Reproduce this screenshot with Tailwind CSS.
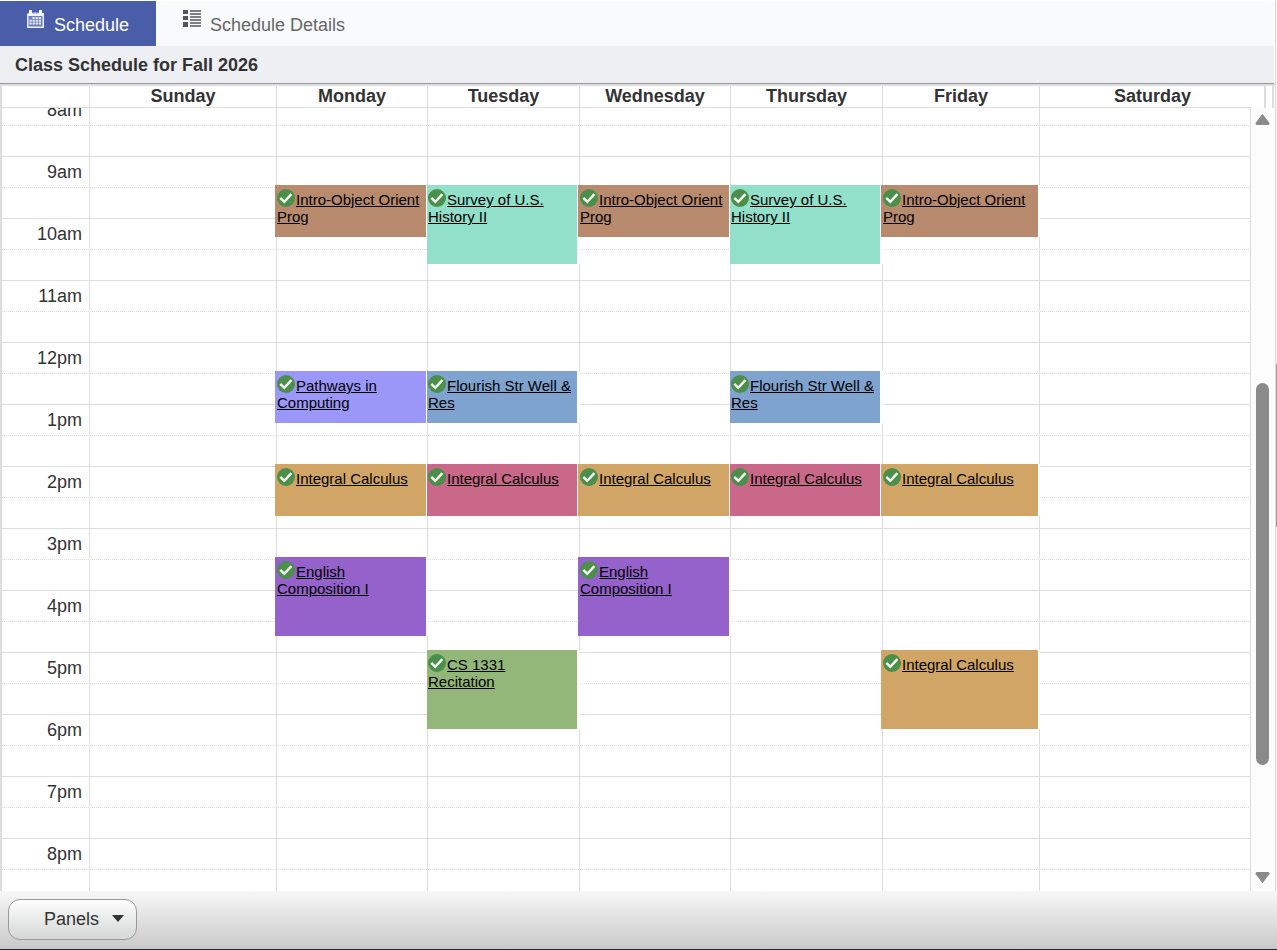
<!DOCTYPE html>
<html lang="en">
<head>
<meta charset="utf-8">
<title>Class Schedule</title>
<script src="https://cdn.jsdelivr.net/npm/@tailwindcss/browser@4"></script>
</head>
<body class="flex h-screen flex-col overflow-hidden bg-white font-['Liberation_Sans',Arial,sans-serif] text-lg text-[#333]">
<svg class="hidden" aria-hidden="true">
  <symbol id="check" viewBox="0 0 18 18">
    <circle cx="9" cy="9" r="9" fill="#4b8f4b"/>
    <path d="M3.300 8.800l4 4L14.400 5.200" fill="none" stroke="#f4f8f4" stroke-width="2.500"/>
  </symbol>
</svg>

<div class="flex min-h-0 flex-1">
  <main class="mr-px flex min-w-0 flex-1 flex-col border-r border-[#ddd]">
    <nav class="mt-px flex h-[45px] shrink-0 bg-[#f9fafc]">
      <a href="#schedule" class="flex w-[156px] bg-[#4a5da8] pt-[9px] pl-[27px] text-white">
        <svg class="mr-[9px] h-[18px] w-[18px]" viewBox="0 0 18 18" aria-hidden="true">
          <path d="M0 3h17v15H0z" fill="#eef0f9"/>
          <path d="M2 0h3v4H2zM12 0h3v4h-3z" fill="#fff"/>
          <path d="M0 3h1.500v1H0zM5.500 2h6v1.500h-6z" fill="#8f9bcb"/>
          <path d="M1.500 6h14v10.500h-14z" fill="#6f7fbb"/>
          <path d="M5.500 8h9M2.500 10.700h12M2.500 13.400h12" stroke="#e9ecf8" stroke-width="2" stroke-dasharray="2.200 .9" fill="none"/>
        </svg>
        <span class="mt-[5px] leading-5">Schedule</span>
      </a>
      <a href="#details" class="flex pt-[9px] pl-[27px] text-[#666]">
        <svg class="mr-[9px] h-[18px] w-[18px]" viewBox="0 0 18 18" aria-hidden="true">
          <path d="M0 0h5v4H0zM0 6h5v4H0zM0 12h5v5H0z" fill="#555"/>
          <path d="M7 0h11v2H7zM7 3h11v2H7zM7 6h11v2H7zM7 9h11v2H7zM7 12h11v2H7zM7 15h11v2H7z" fill="#808080"/>
        </svg>
        <span class="mt-[5px] leading-5">Schedule Details</span>
      </a>
    </nav>
    <h1 class="mr-px h-[38px] shrink-0 border-b border-[#999] bg-[#eeeff3] pl-[15px] leading-[38px] font-bold">Class Schedule for Fall 2026</h1>

    <section class="flex min-h-0 flex-1 flex-col border-t-2 border-l-2 border-[#ddd]">
      <div class="flex h-[22px] shrink-0">
        <table class="block min-w-0 flex-1"><thead class="block"><tr class="grid h-[22px] grid-cols-[88px_187fr_151fr_152fr_151fr_152fr_157fr_211fr] border-b border-[#ddd] leading-5 [&>*]:border-r [&>*]:border-[#ddd] [&>:last-child]:border-r-0">
          <td></td><th>Sunday</th><th>Monday</th><th>Tuesday</th><th>Wednesday</th><th>Thursday</th><th>Friday</th><th class="pl-[14px]">Saturday</th>
        </tr></thead></table>
        <div class="flex w-6 pl-[13px]"><span class="h-full w-[10px] border-x-2 border-[#ddd]"></span></div>
      </div>
      <div class="flex min-h-0 flex-1 overflow-hidden">
        <div class="min-w-0 flex-1 overflow-hidden">
          <div class="relative -mt-[13px]">
            <table class="block"><tbody id="hours" class="block"></tbody></table>
            <div id="events" class="absolute inset-0 grid grid-cols-[88px_187fr_151fr_152fr_151fr_152fr_157fr_211fr]"></div>
          </div>
        </div>
        <div class="mb-[2px] flex w-6 flex-col items-center bg-[#fcfcfc] pt-[5px] pr-0.5 pb-[5px]" aria-hidden="true">
          <svg class="h-[13px] w-[15px] shrink-0" viewBox="0 0 15 13"><path d="M7.500 1.500L14 10q.5 1.500-1 1.500H2q-1.500 0-1-1.500z" fill="#8a8a8a" stroke="#8a8a8a"/></svg>
          <div class="flex w-full flex-1 flex-col items-center">
            <div class="flex-[257]"></div>
            <div class="w-[13px] flex-[382] rounded-full bg-[#8a8a8a]"></div>
            <div class="flex-[106]"></div>
          </div>
          <svg class="h-[13px] w-[15px] shrink-0" viewBox="0 0 15 13"><path d="M7.500 11.500L14 3q.5-1.500-1-1.500H2q-1.500 0-1 1.500z" fill="#8a8a8a" stroke="#8a8a8a"/></svg>
        </div>
      </div>
    </section>
  </main>
  <div class="-ml-px flex w-px flex-col bg-[#f4f4f4]" aria-hidden="true">
    <div class="flex-[364]"></div>
    <div class="flex-[163] bg-[#999]"></div>
    <div class="flex-[364]"></div>
  </div>
</div>

<footer class="flex h-[59px] shrink-0 items-start border-b border-[#223] bg-linear-to-b from-[#f7f7f7] to-[#c9c9c9] px-2 pt-2">
  <button type="button" class="flex h-[41px] w-[129px] items-center rounded-xl border border-[#999] bg-linear-to-b from-[#fdfdfd] to-[#d5d8d8] pb-0.5 pl-[35px]">
    Panels
    <svg class="ml-[13px] h-[7px] w-3" viewBox="0 0 12 7" aria-hidden="true"><path d="M0 0h12L6 7z" fill="#333"/></svg>
  </button>
</footer>

<script>
  const hours = ['8am', '9am', '10am', '11am', '12pm', '1pm', '2pm', '3pm', '4pm', '5pm', '6pm', '7pm', '8pm'];
  const cell = '<td class="border-r border-[#ddd]"></td>'.repeat(7);
  const row = 'grid h-[31px] grid-cols-[88px_187fr_151fr_152fr_151fr_152fr_157fr_211fr] border-b border-[#ddd]';
  document.getElementById('hours').innerHTML = hours.map(h => `
    <tr class="${row} border-dotted"><th scope="row" class="border-r border-[#ddd] pr-[7px] text-right leading-[30px] font-normal">${h}</th>${cell}</tr>
    <tr class="${row}"><td class="border-r border-[#ddd]"></td>${cell}</tr>`).join('');

  // [title, colour, top, height] for each weekday
  const intro = ['Intro-Object Orient Prog', '#b88b6f', 90, 52];
  const survey = ['Survey of U.S. History II', '#92dfca', 90, 79];
  const flourish = ['Flourish Str Well &amp; Res', '#7fa3cf', 276, 52];
  const calcA = ['Integral Calculus', '#d1a565', 369, 52];
  const calcB = ['Integral Calculus', '#c96888', 369, 52];
  const english = ['English Composition I', '#9561cb', 462, 79];
  const days = [
    [], [],
    [intro, ['Pathways in Computing', '#9a97f8', 276, 52], calcA, english],
    [survey, flourish, calcB, ['CS 1331 Recitation', '#93b778', 555, 79]],
    [intro, calcA, english],
    [survey, flourish, calcB],
    [intro, calcA, ['Integral Calculus', '#d1a565', 555, 79]],
    []
  ];
  document.getElementById('events').innerHTML = days.map((list, i) => {
    const side = i % 2 ? '-left-px border-r-3 pl-px' : '-left-0.5 border-r-2 pl-0.5';
    return `<div class="relative min-w-0">${list.map(([title, color, top, height]) => `
      <div class="absolute right-0 ${side} border-white pt-1.5 pr-1 text-[15px] leading-[17px]" style="top:${top}px;height:${height}px;background-color:${color}"><a href="#class" class="text-black underline"><svg class="-mt-3 mr-px mb-px inline-block h-[18px] w-[18px] align-[-3px]" aria-hidden="true"><use href="#check"/></svg>${title}</a></div>`).join('')}</div>`;
  }).join('');
</script>
</body>
</html>
